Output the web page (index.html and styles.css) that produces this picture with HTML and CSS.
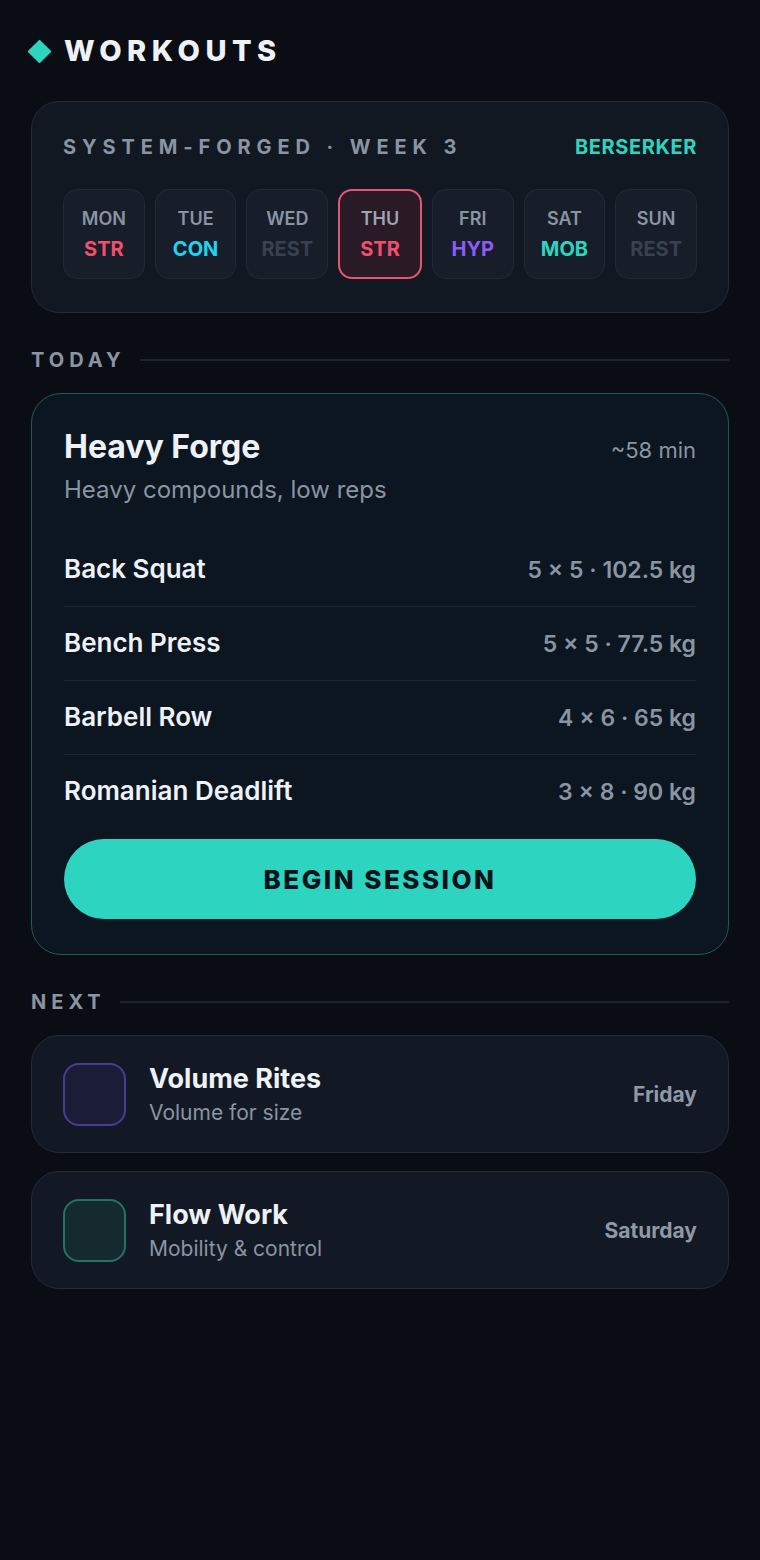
FILE: index.html
```html
<!DOCTYPE html>
<html lang="en">
<head>
<meta charset="utf-8">
<title>Workouts</title>
<link rel="stylesheet" href="styles.css">
</head>
<body>
<main class="page">
  <header class="header">
    <span class="diamond"></span>
    <h1 class="title">WORKOUTS</h1>
  </header>

  <section class="plan card">
    <div class="plan-head">
      <span class="plan-label">SYSTEM-FORGED · WEEK 3</span>
      <span class="plan-class">BERSERKER</span>
    </div>
    <div class="days">
      <div class="day"><span class="day-name">MON</span><span class="day-code c-str">STR</span></div>
      <div class="day"><span class="day-name">TUE</span><span class="day-code c-con">CON</span></div>
      <div class="day"><span class="day-name">WED</span><span class="day-code c-rest">REST</span></div>
      <div class="day day-active"><span class="day-name">THU</span><span class="day-code c-str">STR</span></div>
      <div class="day"><span class="day-name">FRI</span><span class="day-code c-hyp">HYP</span></div>
      <div class="day"><span class="day-name">SAT</span><span class="day-code c-mob">MOB</span></div>
      <div class="day"><span class="day-name">SUN</span><span class="day-code c-rest">REST</span></div>
    </div>
  </section>

  <div class="section-label"><span>TODAY</span><span class="rule"></span></div>

  <section class="today">
    <div class="today-head">
      <h2 class="today-title">Heavy Forge</h2>
      <span class="today-time">~58 min</span>
    </div>
    <p class="today-sub">Heavy compounds, low reps</p>
    <ul class="exercises">
      <li class="ex"><span class="ex-name">Back Squat</span><span class="ex-val">5 × 5 · 102.5 kg</span></li>
      <li class="ex"><span class="ex-name">Bench Press</span><span class="ex-val">5 × 5 · 77.5 kg</span></li>
      <li class="ex"><span class="ex-name">Barbell Row</span><span class="ex-val">4 × 6 · 65 kg</span></li>
      <li class="ex"><span class="ex-name">Romanian Deadlift</span><span class="ex-val">3 × 8 · 90 kg</span></li>
    </ul>
    <button class="begin">BEGIN SESSION</button>
  </section>

  <div class="section-label"><span>NEXT</span><span class="rule"></span></div>

  <div class="next-list">
    <div class="next">
      <span class="next-icon icon-hyp"></span>
      <div class="next-text">
        <span class="next-title">Volume Rites</span>
        <span class="next-sub">Volume for size</span>
      </div>
      <span class="next-day">Friday</span>
    </div>
    <div class="next">
      <span class="next-icon icon-mob"></span>
      <div class="next-text">
        <span class="next-title">Flow Work</span>
        <span class="next-sub">Mobility &amp; control</span>
      </div>
      <span class="next-day">Saturday</span>
    </div>
  </div>
</main>
</body>
</html>
```

FILE: styles.css
```css
* { box-sizing: border-box; }

html, body {
  margin: 0;
  padding: 0;
  background: #0a0d14;
}

body {
  font-family: Inter, "Noto Sans", "Liberation Sans", sans-serif;
  color: #eef2f7;
  min-height: 1560px;
}

.page {
  padding: 33px 31px 40px;
}

.header {
  display: flex;
  align-items: center;
  gap: 16px;
  height: 36px;
  margin-bottom: 32px;
}

.diamond {
  width: 17px;
  height: 17px;
  background: #2dd4bf;
  transform: rotate(45deg);
  border-radius: 1px;
  flex: none;
}

.title {
  margin: 0;
  font-size: 29px;
  line-height: 36px;
  font-weight: 800;
  letter-spacing: 5.5px;
  color: #eef2f7;
}

.card {
  background: #111821;
  border: 1px solid #232b37;
  border-radius: 28px;
}

.plan {
  padding: 33px 31px 33px;
}

.plan-head {
  display: flex;
  justify-content: space-between;
  align-items: baseline;
  line-height: 24px;
  margin-bottom: 30px;
}

.plan-label {
  font-size: 20px;
  font-weight: 700;
  letter-spacing: 5.9px;
  color: #8a94a2;
}

.plan-class {
  font-size: 20px;
  font-weight: 700;
  color: #2dd4bf;
  letter-spacing: 0.6px;
}

.days {
  display: flex;
  gap: 10px;
}

.day {
  flex: 1;
  height: 90px;
  border-radius: 14px;
  background: #171e29;
  border: 1px solid #222a36;
  display: flex;
  flex-direction: column;
  align-items: center;
  justify-content: center;
  gap: 7px;
}

.day-active {
  border: 2px solid #e5566f;
  background: #2a1a26;
}

.day-name {
  font-size: 18px;
  line-height: 22px;
  font-weight: 600;
  color: #8a94a2;
}

.day-active .day-name { color: #9ca5b1; }

.day-code {
  font-size: 20px;
  line-height: 24px;
  font-weight: 700;
}

.c-str { color: #f0506e; }
.c-con { color: #22d3ee; }
.c-rest { color: #394150; }
.c-hyp { color: #8b5cf6; }
.c-mob { color: #2dd4bf; }

.section-label {
  display: flex;
  align-items: center;
  gap: 14px;
  margin: 35px 0 21px;
  line-height: 24px;
  font-size: 20px;
  font-weight: 700;
  letter-spacing: 5px;
  color: #8a94a2;
}

.rule {
  flex: 1;
  height: 2px;
  background: #1c232e;
}

.today {
  background: #0c1620;
  border: 1px solid #1e5c53;
  border-radius: 30px;
  padding: 35px 32px 35px;
}

.today-head {
  display: flex;
  justify-content: space-between;
  align-items: baseline;
}

.today-title {
  margin: 0;
  font-size: 32px;
  line-height: 36px;
  font-weight: 700;
  color: #eef2f7;
}

.today-time {
  font-size: 22px;
  color: #8a94a2;
}

.today-sub {
  margin: 11px 0 29px;
  font-size: 24px;
  line-height: 28px;
  color: #8a94a2;
}

.exercises {
  list-style: none;
  margin: 0;
  padding: 0;
}

.ex {
  display: flex;
  justify-content: space-between;
  align-items: baseline;
  padding: 21px 0;
  line-height: 30px;
  border-bottom: 1px solid #1e2833;
}

.ex:last-child { border-bottom: none; }

.ex-name {
  font-size: 26px;
  font-weight: 600;
  color: #eef2f7;
}

.ex-val {
  font-size: 23px;
  font-weight: 600;
  color: #8a94a2;
}

.begin {
  display: block;
  width: 100%;
  height: 80px;
  margin-top: 11px;
  border: none;
  border-radius: 40px;
  background: #2dd4bf;
  color: #07121a;
  font-family: inherit;
  font-size: 26px;
  font-weight: 800;
  letter-spacing: 2.5px;
}

.next-list {
  display: flex;
  flex-direction: column;
  gap: 18px;
}

.next {
  display: flex;
  align-items: center;
  height: 118px;
  padding: 0 31px;
  background: #121925;
  border: 1px solid #232b37;
  border-radius: 28px;
}

.next-icon {
  width: 63px;
  height: 63px;
  border-radius: 16px;
  flex: none;
  margin-right: 23px;
}

.icon-hyp {
  background: #1b1d36;
  border: 2px solid #4a3c92;
}

.icon-mob {
  background: #152a2e;
  border: 2px solid #1e7566;
}

.next-text {
  flex: 1;
  display: flex;
  flex-direction: column;
  gap: 5px;
}

.next-title {
  font-size: 27px;
  line-height: 32px;
  font-weight: 700;
  color: #eef2f7;
}

.next-sub {
  font-size: 21px;
  line-height: 26px;
  color: #8a94a2;
}

.next-day {
  font-size: 21px;
  font-weight: 700;
  color: #8f99a6;
}
```
